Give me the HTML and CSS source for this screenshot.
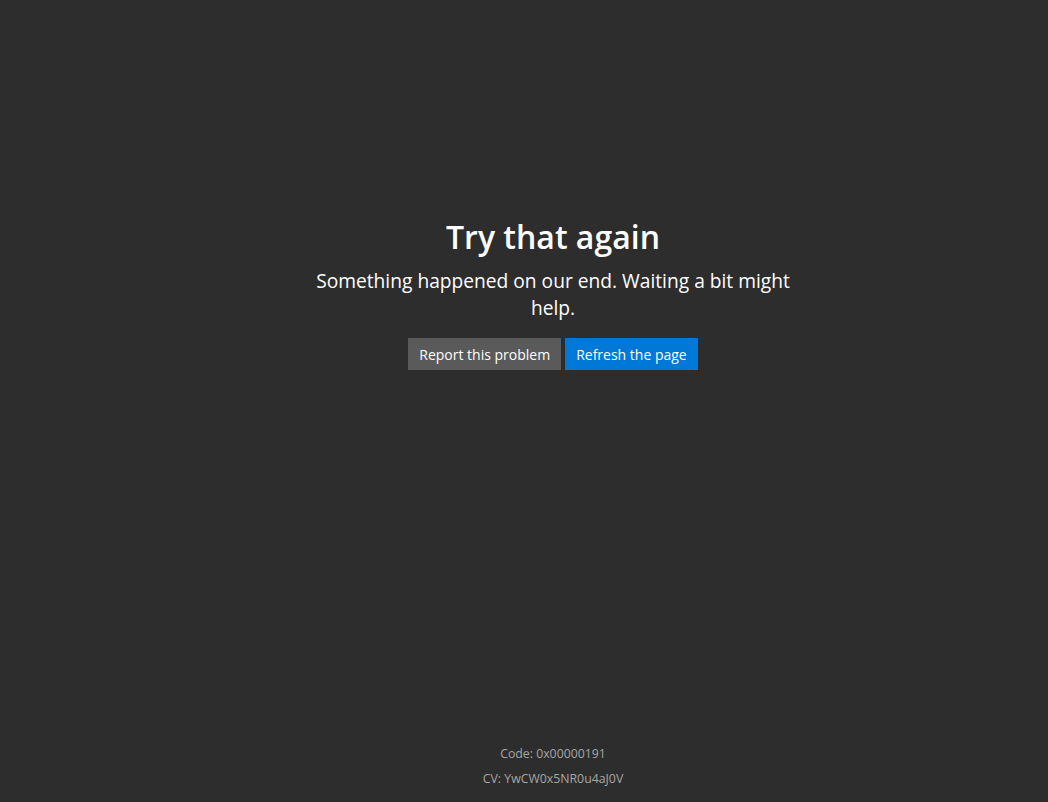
FILE: index.html
```html
<!DOCTYPE html>
<html lang="en">
<head>
  <meta charset="UTF-8">
  <title>Try that again</title>
  <meta name="viewport" content="width=device-width, initial-scale=1.0">
  <link rel="stylesheet" href="styles.css">
</head>
<body>
  <div class="page">
    <!-- Error message -->
    <main class="error">
      <h1>Try that again</h1>
      <p class="message">Something happened on our end. Waiting a bit might help.</p>
      <div class="actions">
        <button class="btn btn-secondary">Report this problem</button>
        <button class="btn btn-primary">Refresh the page</button>
      </div>
    </main>

    <!-- Diagnostic codes -->
    <footer class="codes">
      <div>Code: 0x00000191</div>
      <div>CV: YwCW0x5NR0u4aJ0V</div>
    </footer>
  </div>
</body>
</html>
```

FILE: styles.css
```css
/* Reset & Global Styles */
* { margin: 0; padding: 0; box-sizing: border-box; }
html, body { height: 100%; }
body {
  font-family: 'Segoe UI', 'Open Sans', 'Noto Sans', sans-serif;
  background-color: #2d2d2d;
  color: #fff;
  overflow: hidden;
}

.page {
  height: 100%;
  display: flex;
  flex-direction: column;
  padding-left: 58px;
}

/* Error Block */
.error {
  flex: 1;
  display: flex;
  flex-direction: column;
  align-items: center;
  justify-content: center;
  text-align: center;
  padding-bottom: 156px;
}
.error h1 {
  font-size: 32px;
  font-weight: 600;
  line-height: 44px;
}
.error .message {
  max-width: 495px;
  font-size: 19.2px;
  line-height: 27px;
  margin-top: 8px;
}

.actions {
  display: flex;
  gap: 4px;
  margin-top: 17px;
}
.btn {
  border: none;
  color: #fff;
  font-family: inherit;
  font-size: 14px;
  height: 32px;
  padding: 0 11px;
  cursor: pointer;
}
.btn-secondary { background-color: #5a5a5a; }
.btn-primary { background-color: #0078d7; }

/* Footer Codes */
.codes {
  text-align: center;
  font-size: 12.3px;
  line-height: 25px;
  color: #a6a6a6;
  padding-bottom: 11px;
}
```
